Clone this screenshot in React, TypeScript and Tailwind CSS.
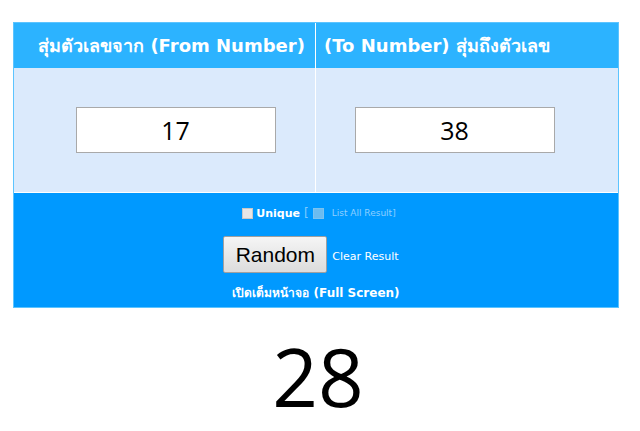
import React, { useState } from "react";

const thai = { fontFamily: 'Tahoma, "DejaVu Sans", "Noto Sans", sans-serif' };

export default function App() {
  const [from, setFrom] = useState("17");
  const [to, setTo] = useState("38");

  return (
    <div className="h-[431px] w-[640px] bg-white" style={thai}>
      <div className="h-[22px]" />
      <div className="ml-[13px] w-[606px] border border-[#5cc4ff]">
        {/* header row */}
        <div className="flex h-[45px] bg-[#2cb3ff] text-[18px] font-bold text-white">
          <div className="flex w-[302px] items-center justify-center border-r border-white pl-[14px]">
            สุ่มตัวเลขจาก (From Number)
          </div>
          <div className="flex flex-1 items-center pl-[8px]">
            (To Number) สุ่มถึงตัวเลข
          </div>
        </div>
        {/* inputs row */}
        <div className="flex h-[124px] bg-[#dbeafc]">
          <div className="flex w-[302px] items-center justify-center border-r border-white pl-[22px]">
            <input
              value={from}
              onChange={(e) => setFrom(e.target.value)}
              className="h-[46px] w-[200px] border border-[#a9a9a9] bg-white text-center text-[25px] text-black outline-none"
              style={{ fontFamily: '"Open Sans", "Noto Sans", sans-serif' }}
            />
          </div>
          <div className="flex flex-1 items-center justify-center pr-[25px]">
            <input
              value={to}
              onChange={(e) => setTo(e.target.value)}
              className="h-[46px] w-[200px] border border-[#a9a9a9] bg-white text-center text-[25px] text-black outline-none"
              style={{ fontFamily: '"Open Sans", "Noto Sans", sans-serif' }}
            />
          </div>
        </div>
        {/* controls */}
        <div className="flex h-[115px] flex-col items-center border-t border-white bg-[#0099ff] pt-[14px] text-white">
          <div className="ml-[6px] flex items-center text-[12px] leading-none">
            <span className="mr-[3px] inline-block h-[11px] w-[11px] border border-[#c8c8c8] bg-[#e6e6e6]" />
            <span className="text-[11px] font-bold">Unique</span>
            <span className="ml-[4px] text-[#7fcbff]">[</span>
            <span className="ml-[4px] inline-block h-[11px] w-[11px] border border-[#7cc3f0] bg-[#6cbcf0]" />
            <span className="ml-[8px] text-[9px] text-[#8fd0ff]">List All Result]</span>
          </div>
          <div className="mr-[10px] mt-[17px] flex items-center">
            <button
              type="button"
              className="h-[37px] w-[104px] rounded-[2px] border border-[#a0a0a0] bg-gradient-to-b from-[#f5f5f5] to-[#dcdcdc] text-[21px] text-black"
              style={{ fontFamily: '"Liberation Sans", Arial, sans-serif' }}
            >
              Random
            </button>
            <span className="ml-[5px] mt-[6px] text-[11px] text-white">Clear Result</span>
          </div>
          <div className="mt-[11px] text-[12px] font-bold">เปิดเต็มหน้าจอ (Full Screen)</div>
        </div>
      </div>
      <div
        className="mr-[4px] mt-[28px] text-center text-[80px] leading-none text-black"
        style={{ fontFamily: '"Open Sans", "Noto Sans", sans-serif' }}
      >
        28
      </div>
    </div>
  );
}
